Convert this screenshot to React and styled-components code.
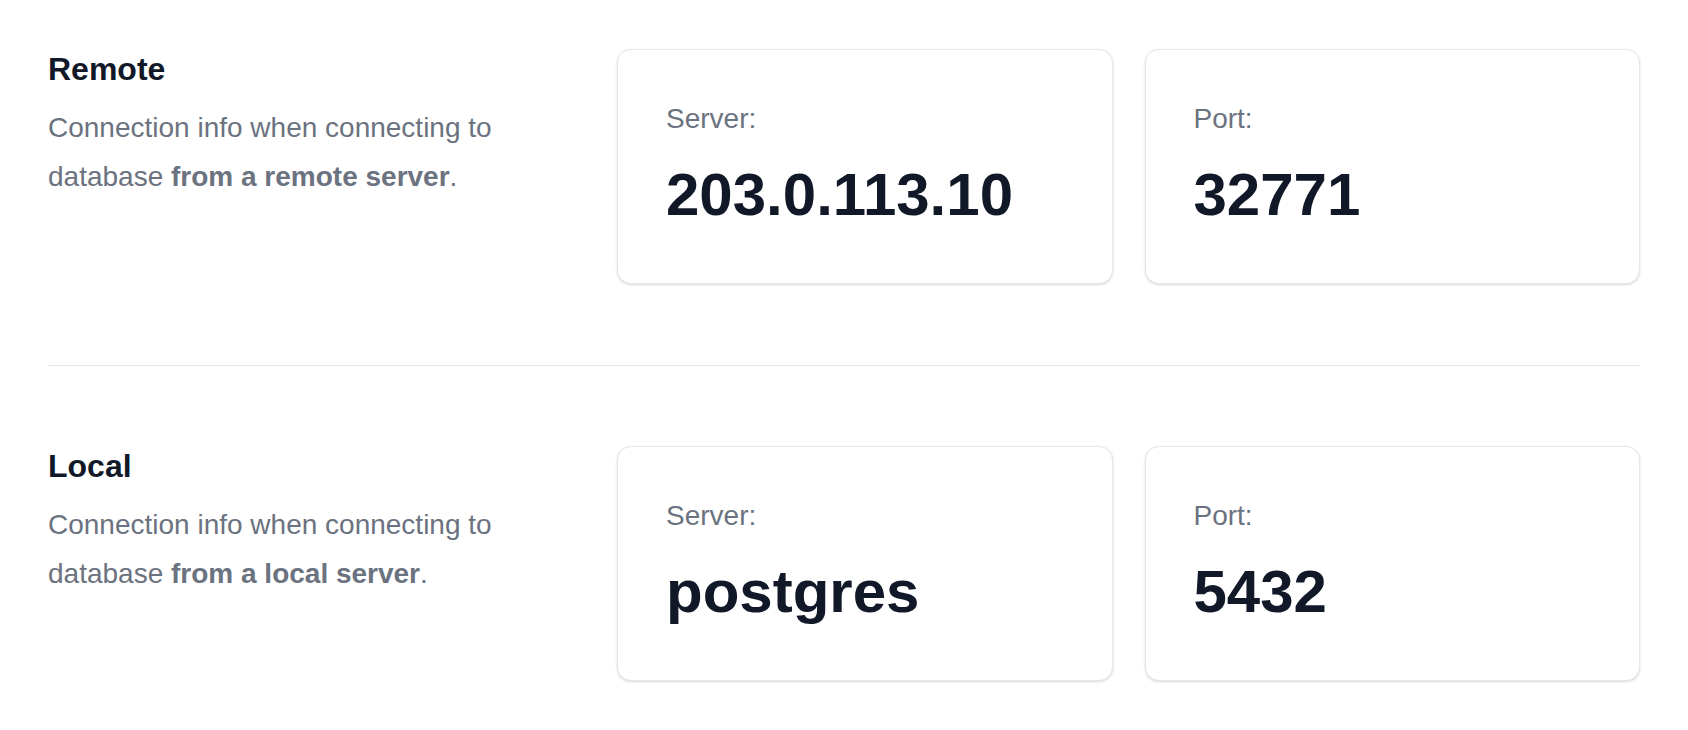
import React from 'react'
import styled, { createGlobalStyle } from 'styled-components'

const GlobalStyle = createGlobalStyle`
  * { box-sizing: border-box; }
  body {
    margin: 0;
    background: #ffffff;
    font-family: "Liberation Sans", Arial, sans-serif;
  }
`

const Pagina = styled.div`
  padding: 49px 48px 48px;
`

const Seccion = styled.section`
  display: grid;
  grid-template-columns: 537px 1fr 1fr;
  column-gap: 32px;
  align-items: start;
`

const Separador = styled.hr`
  border: 0;
  border-top: 1px solid #e5e7eb;
  margin: 81px 0 80px;
`

const Titulo = styled.h3`
  margin: 0;
  font-size: 32px;
  line-height: 40px;
  font-weight: 700;
  color: #111827;
`

const Descripcion = styled.p`
  margin: 14px 0 0;
  font-size: 28px;
  line-height: 49px;
  color: #6b7280;

  strong {
    font-weight: 700;
  }
`

const Tarjeta = styled.div`
  background: #ffffff;
  border: 1px solid #e5e7eb;
  border-radius: 14px;
  box-shadow: 0 1px 3px rgba(0, 0, 0, 0.1), 0 1px 2px rgba(0, 0, 0, 0.06);
  padding: 49px 48px 58px;
`

const Etiqueta = styled.div`
  font-size: 28px;
  line-height: 40px;
  color: #6b7280;
`

const Valor = styled.div`
  margin-top: 26px;
  font-size: 60px;
  line-height: 60px;
  font-weight: 700;
  color: #111827;
`

const conexiones = [
  { titulo: 'Remote', origen: 'from a remote server', servidor: '203.0.113.10', puerto: '32771' },
  { titulo: 'Local', origen: 'from a local server', servidor: 'postgres', puerto: '5432' },
]

function Conexion({ titulo, origen, servidor, puerto }) {
  return (
    <Seccion>
      <div>
        <Titulo>{titulo}</Titulo>
        <Descripcion>
          Connection info when connecting to database <strong>{origen}</strong>.
        </Descripcion>
      </div>
      <Tarjeta>
        <Etiqueta>Server:</Etiqueta>
        <Valor>{servidor}</Valor>
      </Tarjeta>
      <Tarjeta>
        <Etiqueta>Port:</Etiqueta>
        <Valor>{puerto}</Valor>
      </Tarjeta>
    </Seccion>
  )
}

export default function App() {
  return (
    <>
      <GlobalStyle />
      <Pagina>
        <Conexion {...conexiones[0]} />
        <Separador />
        <Conexion {...conexiones[1]} />
      </Pagina>
    </>
  )
}
